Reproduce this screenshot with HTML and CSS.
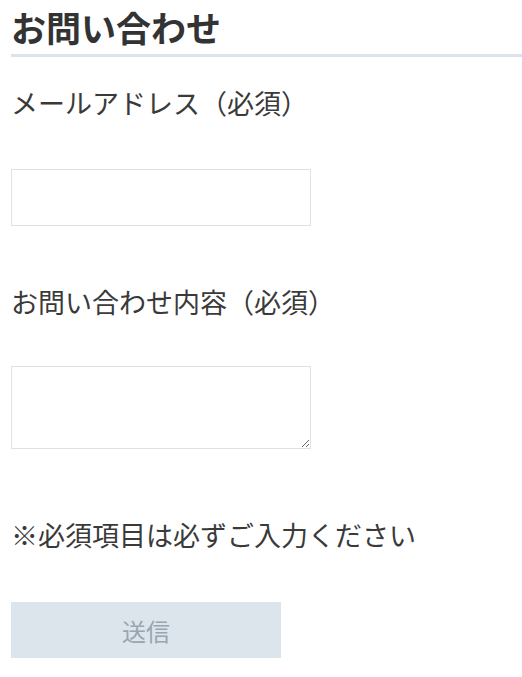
FILE: index.html
```html
<!DOCTYPE html>
<html lang="ja">
<head>
<meta charset="utf-8">
<link rel="stylesheet" href="styles.css">
</head>
<body>
<div class="page">
  <h2 class="title">お問い合わせ</h2>
  <form class="form">
    <p class="label">メールアドレス（必須）</p>
    <input class="field" type="email">
    <p class="label label-2">お問い合わせ内容（必須）</p>
    <textarea class="area"></textarea>
    <p class="note">※必須項目は必ずご入力ください</p>
    <button class="submit" type="button">送信</button>
  </form>
</div>
</body>
</html>
```
FILE: styles.css
```css
html, body {
  margin: 0;
  padding: 0;
  background: #fff;
}
.page {
  padding: 0 0 0 11px;
  font-family: "Noto Sans CJK JP", "Noto Sans", sans-serif;
  color: #3a3a3a;
}
.title {
  margin: 0;
  padding: 4px 0 4px;
  font-size: 35px;
  line-height: 46px;
  font-weight: 700;
  color: #333;
  border-bottom: 3px solid #dde3ea;
}
.form {
  display: flex;
  flex-direction: column;
  align-items: flex-start;
}
.label {
  margin: 28px 0 0;
  font-size: 27px;
  line-height: 36px;
  font-weight: 400;
}
.field {
  margin-top: 48px;
  width: 300px;
  height: 57px;
  box-sizing: border-box;
  border: 1px solid #e1e1e1;
  background: #fff;
  padding: 0 8px;
}
.label-2 {
  margin-top: 58px;
}
.area {
  margin-top: 46px;
  width: 300px;
  height: 83px;
  box-sizing: border-box;
  border: 1px solid #e1e1e1;
  background: #fff;
}
.note {
  margin: 68px 0 0;
  font-size: 27px;
  line-height: 36px;
}
.submit {
  margin-top: 49px;
  width: 270px;
  height: 56px;
  border: none;
  background: #dce5ec;
  color: #98a6b0;
  font-family: "Noto Sans CJK JP", sans-serif;
  font-size: 24px;
}
```
